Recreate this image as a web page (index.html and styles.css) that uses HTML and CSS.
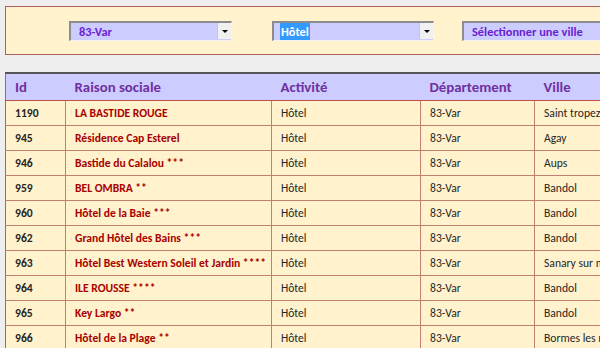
FILE: index.html
```html
<!DOCTYPE html>
<html lang="fr">
<head>
    <meta charset="UTF-8">
    <title>Liste des établissements</title>
    <link rel="stylesheet" href="styles.css">
</head>
<body>
    <div class="filters">
        <div class="combo combo-dept">
            <span class="combo-text">83-Var</span>
            <span class="combo-btn"></span>
        </div>
        <div class="combo combo-act">
            <span class="combo-text"><span class="selected">Hôtel</span></span>
            <span class="combo-btn"></span>
        </div>
        <div class="combo combo-ville">
            <span class="combo-text">Sélectionner une ville</span>
        </div>
    </div>

    <table class="grid">
        <thead>
            <tr>
                <th class="col-id">Id</th>
                <th class="col-nom">Raison sociale</th>
                <th class="col-act">Activité</th>
                <th class="col-dept">Département</th>
                <th class="col-ville">Ville</th>
            </tr>
        </thead>
        <tbody>
            <tr><td class="id">1190</td><td class="nom">LA BASTIDE ROUGE</td><td>Hôtel</td><td>83-Var</td><td>Saint tropez</td></tr>
            <tr><td class="id">945</td><td class="nom">Résidence Cap Esterel</td><td>Hôtel</td><td>83-Var</td><td>Agay</td></tr>
            <tr><td class="id">946</td><td class="nom">Bastide du Calalou ***</td><td>Hôtel</td><td>83-Var</td><td>Aups</td></tr>
            <tr><td class="id">959</td><td class="nom">BEL OMBRA **</td><td>Hôtel</td><td>83-Var</td><td>Bandol</td></tr>
            <tr><td class="id">960</td><td class="nom">Hôtel de la Baie ***</td><td>Hôtel</td><td>83-Var</td><td>Bandol</td></tr>
            <tr><td class="id">962</td><td class="nom">Grand Hôtel des Bains ***</td><td>Hôtel</td><td>83-Var</td><td>Bandol</td></tr>
            <tr><td class="id">963</td><td class="nom">Hôtel Best Western Soleil et Jardin ****</td><td>Hôtel</td><td>83-Var</td><td>Sanary sur mer</td></tr>
            <tr><td class="id">964</td><td class="nom">ILE ROUSSE ****</td><td>Hôtel</td><td>83-Var</td><td>Bandol</td></tr>
            <tr><td class="id">965</td><td class="nom">Key Largo **</td><td>Hôtel</td><td>83-Var</td><td>Bandol</td></tr>
            <tr><td class="id">966</td><td class="nom">Hôtel de la Plage **</td><td>Hôtel</td><td>83-Var</td><td>Bormes les mimosas</td></tr>
        </tbody>
    </table>
</body>
</html>
```

FILE: styles.css
```css
body {
    margin: 0;
    padding: 6px 0 0 5px;
    background: #eeeeee;
    font-family: Carlito, Calibri, Lato, sans-serif;
    overflow: hidden;
    width: 600px;
    height: 348px;
    box-sizing: border-box;
}

.filters {
    display: flex;
    align-items: center;
    width: 620px;
    height: 49px;
    box-sizing: border-box;
    padding-left: 63px;
    background: #fff2cc;
    border: 1px solid #b06060;
}

.combo {
    display: flex;
    align-items: center;
    height: 20px;
    box-sizing: border-box;
    background: #ccccff;
    border-top: 2px solid #8c8c8c;
    border-left: 2px solid #8c8c8c;
    border-bottom: 1px solid #f4f4f4;
    border-right: 1px solid #f4f4f4;
    color: #6a1fd0;
    font-size: 12.4px;
    font-weight: bold;
}

.combo-dept { width: 163px; }
.combo-act { width: 162px; margin-left: 40px; }
.combo-ville { width: 160px; margin-left: 28px; }

.combo-text {
    flex: 1;
    padding-left: 8px;
    white-space: nowrap;
}

.combo-act .combo-text { padding-left: 6px; }

.selected {
    background: #3399ff;
    color: #ffffff;
    padding: 1px 1px;
}

.combo-btn {
    position: relative;
    width: 13px;
    height: 16px;
    background: #f0f0f0;
    border-left: 1px solid #c8c8c8;
}

.combo-btn::after {
    content: "";
    position: absolute;
    left: 4px;
    top: 7px;
    border-left: 3px solid transparent;
    border-right: 3px solid transparent;
    border-top: 3px solid #000000;
}

.grid {
    margin-top: 17px;
    border-collapse: collapse;
    table-layout: fixed;
    width: 650px;
    border-top: 2px solid #555555;
    border-left: 1px solid #b06060;
}

.grid th,
.grid td {
    box-sizing: border-box;
}

.grid th {
    height: 27px;
    padding: 0 0 0 9px;
    background: #ccccff;
    color: #7030a0;
    font-size: 14.8px;
    font-weight: bold;
    text-align: left;
    border-bottom: 1px solid #c0504d;
}

.col-id { width: 60px; }
.col-nom { width: 206px; }
.col-act { width: 149px; }
.col-dept { width: 114px; }

.grid td {
    height: 25px;
    padding: 0 0 0 9px;
    background: #fff2cc;
    color: #262626;
    font-size: 11.6px;
    white-space: nowrap;
    overflow: hidden;
    border-right: 1px solid #c08070;
    border-bottom: 1px solid #c08070;
}

.grid td.id {
    font-weight: bold;
}

.grid td.nom {
    color: #a80000;
    font-weight: bold;
}
```
